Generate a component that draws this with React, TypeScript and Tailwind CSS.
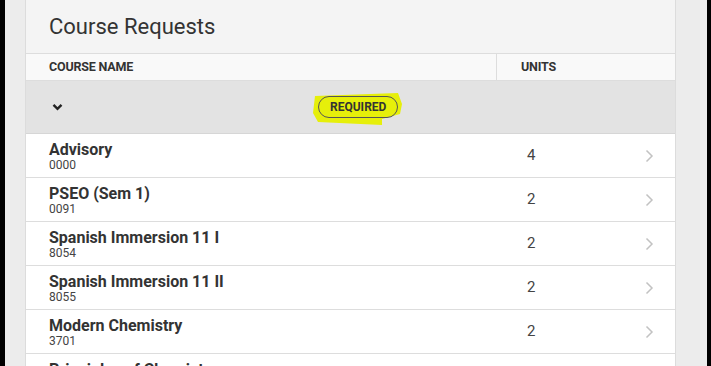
import React from 'react';

interface CourseRow {
  name: string;
  code: string;
  units: number;
}

const rows: CourseRow[] = [
  { name: 'Advisory', code: '0000', units: 4 },
  { name: 'PSEO (Sem 1)', code: '0091', units: 2 },
  { name: 'Spanish Immersion 11 I', code: '8054', units: 2 },
  { name: 'Spanish Immersion 11 II', code: '8055', units: 2 },
  { name: 'Modern Chemistry', code: '3701', units: 2 },
  { name: 'Principles of Chemistry', code: '3702', units: 2 }
];

const ChevronRight = () => (
  <svg width="9" height="14" viewBox="0 0 9 14" fill="none">
    <path d="M1.5 1.5 L7 7 L1.5 12.5" stroke="#c2c2c2" strokeWidth="1.5" />
  </svg>
);

const ChevronDown = () => (
  <svg width="11" height="8" viewBox="0 0 11 8" fill="none">
    <path d="M1.5 1.8 L5.5 5.8 L9.5 1.8" stroke="#222" strokeWidth="2.4" />
  </svg>
);

export default function App() {
  return (
    <div
      className="flex h-[366px] w-[711px] overflow-hidden border-l-[5px] border-r-[4px] border-black bg-[#ececec]"
      style={{ fontFamily: 'Roboto, "Liberation Sans", sans-serif' }}
    >
      <div className="ml-[20px] mr-[31px] flex-1 border-x border-[#dcdcdc] bg-[#f4f4f4]">
        <div className="flex h-[53px] items-center px-[23px] pb-[1px] text-[22px] text-[#333]">Course Requests</div>

        <div className="flex h-[28px] border-y border-[#dddddd] bg-[#f9f9f9] text-[12.5px] font-bold tracking-[-0.2px] text-[#333]">
          <div className="flex w-[471px] items-center border-r border-[#dddddd] pl-[23px]">COURSE NAME</div>
          <div className="flex items-center pl-[24px]">UNITS</div>
        </div>

        <div className="relative flex h-[53px] items-center border-b border-[#d6d6d6] bg-[#e3e3e3] pl-[26px]">
          <ChevronDown />
          <div className="relative ml-[255px] flex items-center">
            <svg className="absolute left-[-6px] top-[-3px]" width="92" height="34" viewBox="0 0 92 34">
              <path d="M3 3 L86 0 L90 11 L88 21 L70 26 L70 32 L6 29 L1 20 Z" fill="#e6ef0a" />
            </svg>
            <span className="relative rounded-full border border-[#555] px-[11px] py-[2px] text-[12px] font-bold leading-[16px] text-[#333]">
              REQUIRED
            </span>
          </div>
        </div>

        <div className="bg-white">
          {rows.map((row) => (
            <div key={row.code} className="flex h-[44px] items-center border-b border-[#dddddd]">
              <div className="flex w-[472px] flex-col pl-[23px] pt-[1px]">
                <span className="text-[16px] font-bold leading-[17px] text-[#333]">{row.name}</span>
                <span className="text-[12px] leading-[14px] text-[#444]">{row.code}</span>
              </div>
              <div className="w-[147px] pl-[29px] text-[15px] text-[#444]">{row.units}</div>
              <ChevronRight />
            </div>
          ))}
        </div>
      </div>
    </div>
  );
}
